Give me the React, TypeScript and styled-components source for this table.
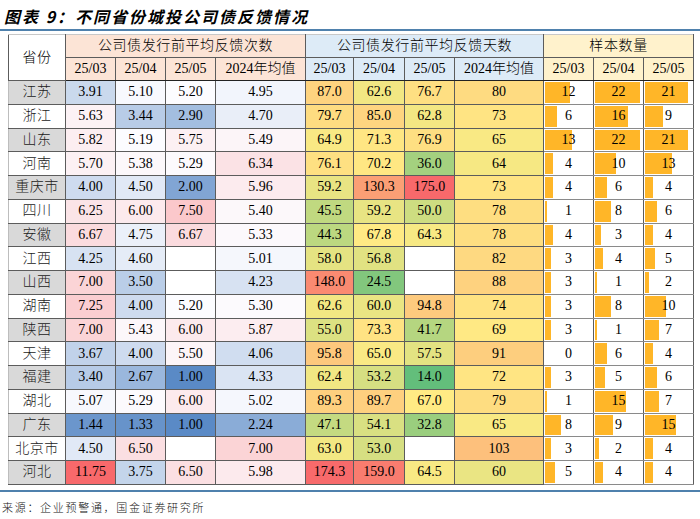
import React from "react";
import styled, { createGlobalStyle } from "styled-components";

type RGB = [number, number, number];

interface Row {
  name: string;
  counts: string[];
  days: string[];
  samples: number[];
}

const rows: Row[] = [
  { name: "江苏", counts: ["3.91", "5.10", "5.20", "4.95"], days: ["87.0", "62.6", "76.7", "80"], samples: [12, 22, 21] },
  { name: "浙江", counts: ["5.63", "3.44", "2.90", "4.70"], days: ["79.7", "85.0", "62.8", "73"], samples: [6, 16, 9] },
  { name: "山东", counts: ["5.82", "5.19", "5.75", "5.49"], days: ["64.9", "71.3", "76.9", "65"], samples: [13, 22, 21] },
  { name: "河南", counts: ["5.70", "5.38", "5.29", "6.34"], days: ["76.1", "70.2", "36.0", "64"], samples: [4, 10, 13] },
  { name: "重庆市", counts: ["4.00", "4.50", "2.00", "5.96"], days: ["59.2", "130.3", "175.0", "73"], samples: [4, 6, 4] },
  { name: "四川", counts: ["6.25", "6.00", "7.50", "5.40"], days: ["45.5", "59.2", "50.0", "78"], samples: [1, 8, 6] },
  { name: "安徽", counts: ["6.67", "4.75", "6.67", "5.33"], days: ["44.3", "67.8", "64.3", "78"], samples: [4, 3, 4] },
  { name: "江西", counts: ["4.25", "4.60", "", "5.01"], days: ["58.0", "56.8", "", "82"], samples: [3, 4, 5] },
  { name: "山西", counts: ["7.00", "3.50", "", "4.23"], days: ["148.0", "24.5", "", "88"], samples: [3, 1, 2] },
  { name: "湖南", counts: ["7.25", "4.00", "5.20", "5.30"], days: ["62.6", "60.0", "94.8", "74"], samples: [3, 8, 10] },
  { name: "陕西", counts: ["7.00", "5.43", "6.00", "5.87"], days: ["55.0", "73.3", "41.7", "69"], samples: [3, 1, 7] },
  { name: "天津", counts: ["3.67", "4.00", "5.50", "4.06"], days: ["95.8", "65.0", "57.5", "91"], samples: [0, 6, 4] },
  { name: "福建", counts: ["3.40", "2.67", "1.00", "4.33"], days: ["62.4", "53.2", "14.0", "72"], samples: [3, 5, 6] },
  { name: "湖北", counts: ["5.07", "5.29", "6.00", "5.02"], days: ["89.3", "89.7", "67.0", "79"], samples: [1, 15, 7] },
  { name: "广东", counts: ["1.44", "1.33", "1.00", "2.24"], days: ["47.1", "54.1", "32.8", "65"], samples: [8, 9, 15] },
  { name: "北京市", counts: ["4.50", "6.50", "", "7.00"], days: ["63.0", "53.0", "", "103"], samples: [3, 2, 4] },
  { name: "河北", counts: ["11.75", "3.75", "6.50", "5.98"], days: ["174.3", "159.0", "64.5", "60"], samples: [5, 4, 4] },
];

const periods = ["25/03", "25/04", "25/05"];

// excel-style 3 colour scales
const BLUE: RGB = [90, 138, 198];
const WHITE: RGB = [252, 252, 255];
const RED: RGB = [248, 105, 107];
const GREEN: RGB = [99, 190, 123];
const YELLOW: RGB = [255, 235, 132];

const mix = (a: RGB, b: RGB, t: number) =>
  `rgb(${a.map((v, i) => Math.round(v + (b[i] - v) * Math.min(1, Math.max(0, t)))).join(",")})`;

const median = (vals: number[]) => {
  const s = [...vals].sort((a, b) => a - b);
  const m = Math.floor(s.length / 2);
  return s.length % 2 ? s[m] : (s[m - 1] + s[m]) / 2;
};

const makeScale = (vals: number[], lo: RGB, mid: RGB, hi: RGB) => {
  const min = Math.min(...vals);
  const max = Math.max(...vals);
  const med = median(vals);
  return (v: number) =>
    v <= med ? mix(lo, mid, (v - min) / (med - min)) : mix(mid, hi, (v - med) / (max - med));
};

const nums = (key: "counts" | "days") =>
  rows.flatMap((r) => r[key]).filter((s) => s !== "").map(Number);

const countColor = makeScale(nums("counts"), BLUE, WHITE, RED);
const dayColor = makeScale(nums("days"), GREEN, YELLOW, RED);

const BAR_UNIT = 2.05;

const GlobalStyle = createGlobalStyle`
  html, body {
    margin: 0;
    padding: 0;
    background: #fff;
  }
  body {
    font-family: "Liberation Serif", "Noto Sans CJK SC", serif;
    color: #000;
  }
`;

const Page = styled.div`
  width: 700px;
  height: 519px;
  display: flex;
  flex-direction: column;
  overflow: hidden;
`;

const Title = styled.h1`
  margin: 0;
  padding: 6px 0 0 4px;
  height: 23px;
  font: italic 700 16px/20px "Noto Sans CJK SC", sans-serif;
  letter-spacing: 2px;
  white-space: nowrap;
`;

const Rule = styled.div`
  height: 2px;
  background: #4f81ad;
`;

const Table = styled.table`
  margin: 3px 0 0 8px;
  width: 685px;
  border-collapse: collapse;
  table-layout: fixed;
  font-size: 14px;
  font-weight: 300;
  line-height: 16px;
`;

const HeadCell = styled.th<{ $tone: "plain" | "count" | "day" | "sample" }>`
  height: 22px;
  padding: 0;
  font-weight: 300;
  text-align: center;
  border: 1px solid #5c5c5c;
  border-top-color: #c8c8c8;
  letter-spacing: 0.6px;
  background: ${(p) =>
    ({ plain: "#fff", count: "#fce4d6", day: "#ddebf7", sample: "#fff2cc" })[p.$tone]};
`;

const SubHead = styled(HeadCell)`
  border-top-color: #222;
  border-bottom-color: #222;
  letter-spacing: 0;
`;

const DataRow = styled.tr`
  height: 23.76px;
`;

const Province = styled.td<{ $shade: boolean }>`
  padding: 0;
  text-align: center;
  letter-spacing: 0.5px;
  color: #1a1a1a;
  border: 1px solid #5c5c5c;
  border-left-color: #bdbdbd;
  background: ${(p) => (p.$shade ? "#d9d9d9" : "#fff")};
`;

const ValueCell = styled.td`
  padding: 0;
  text-align: center;
  border: 1px solid #5c5c5c;
  background: #fff;
`;

const SampleCell = styled(ValueCell)`
  border-color: #8a8a8a #5c5c5c;
`;

const Footer = styled.div`
  margin-top: 5px;
`;

const Source = styled.p`
  margin: 7px 0 0 2px;
  font: 300 11px/16px "Noto Sans CJK SC", sans-serif;
  letter-spacing: 1.7px;
  color: #111;
`;

const App: React.FC = () => (
  <Page>
    <GlobalStyle />
    <Title>图表 9：不同省份城投公司债反馈情况</Title>
    <Rule />
    <Table>
      <colgroup>
        {[57, 50, 50, 50, 90, 48, 51, 50, 89, 50, 50, 50].map((w, i) => (
          <col key={i} style={{ width: w }} />
        ))}
      </colgroup>
      <thead>
        <tr>
          <HeadCell $tone="plain" rowSpan={2}>
            省份
          </HeadCell>
          <HeadCell $tone="count" colSpan={4}>
            公司债发行前平均反馈次数
          </HeadCell>
          <HeadCell $tone="day" colSpan={4}>
            公司债发行前平均反馈天数
          </HeadCell>
          <HeadCell $tone="sample" colSpan={3}>
            样本数量
          </HeadCell>
        </tr>
        <tr>
          {periods.map((p) => (
            <SubHead key={"c" + p} $tone="count">
              {p}
            </SubHead>
          ))}
          <SubHead $tone="count">2024年均值</SubHead>
          {periods.map((p) => (
            <SubHead key={"d" + p} $tone="day">
              {p}
            </SubHead>
          ))}
          <SubHead $tone="day">2024年均值</SubHead>
          {periods.map((p) => (
            <SubHead key={"s" + p} $tone="sample">
              {p}
            </SubHead>
          ))}
        </tr>
      </thead>
      <tbody>
        {rows.map((r, i) => (
          <DataRow key={r.name}>
            <Province $shade={i % 2 === 0}>{r.name}</Province>
            {r.counts.map((v, j) => (
              <ValueCell key={"c" + j} style={v ? { background: countColor(Number(v)) } : undefined}>
                {v}
              </ValueCell>
            ))}
            {r.days.map((v, j) => (
              <ValueCell key={"d" + j} style={v ? { background: dayColor(Number(v)) } : undefined}>
                {v}
              </ValueCell>
            ))}
            {r.samples.map((v, j) => (
              <SampleCell
                key={"s" + j}
                style={{
                  background: `linear-gradient(#ffb628, #ffb628) no-repeat 1px 1px / ${Math.round(
                    v * BAR_UNIT
                  )}px calc(100% - 2px), #fff`,
                }}
              >
                {v}
              </SampleCell>
            ))}
          </DataRow>
        ))}
      </tbody>
    </Table>
    <Footer>
      <Rule />
      <Source>来源：企业预警通，国金证券研究所</Source>
    </Footer>
  </Page>
);

export default App;
